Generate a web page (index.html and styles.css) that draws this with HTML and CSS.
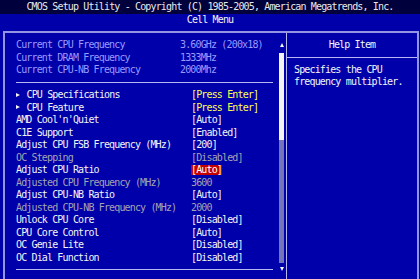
FILE: index.html
```html
<!DOCTYPE html>
<html>
<head>
<meta charset="utf-8">
<link rel="stylesheet" href="styles.css">
</head>
<body>
<div class="title">CMOS Setup Utility - Copyright (C) 1985-2005, American Megatrends, Inc.</div>
<div class="subtitle">Cell Menu</div>
<div class="frame">
  <div class="left">
    <div class="list">
      <div class="row info"><span class="label">Current CPU Frequency</span><span class="val">3.60GHz (200x18)</span></div>
      <div class="row info"><span class="label">Current DRAM Frequency</span><span class="val">1333MHz</span></div>
      <div class="row info"><span class="label">Current CPU-NB Frequency</span><span class="val">2000Mhz</span></div>
      <div class="sep"></div>
      <div class="row"><span class="label"><span class="tri"></span>CPU Specifications</span><span class="val enter">[Press Enter]</span></div>
      <div class="row"><span class="label"><span class="tri"></span>CPU Feature</span><span class="val enter">[Press Enter]</span></div>
      <div class="row"><span class="label">AMD Cool'n'Quiet</span><span class="val">[Auto]</span></div>
      <div class="row"><span class="label">C1E Support</span><span class="val">[Enabled]</span></div>
      <div class="row"><span class="label">Adjust CPU FSB Frequency (MHz)</span><span class="val">[200]</span></div>
      <div class="row dim"><span class="label">OC Stepping</span><span class="val">[Disabled]</span></div>
      <div class="row"><span class="label">Adjust CPU Ratio</span><span class="val sel">[Auto]</span></div>
      <div class="row dim"><span class="label">Adjusted CPU Frequency (MHz)</span><span class="val">3600</span></div>
      <div class="row"><span class="label">Adjust CPU-NB Ratio</span><span class="val">[Auto]</span></div>
      <div class="row dim"><span class="label">Adjusted CPU-NB Frequency (MHz)</span><span class="val">2000</span></div>
      <div class="row"><span class="label">Unlock CPU Core</span><span class="val">[Disabled]</span></div>
      <div class="row"><span class="label">CPU Core Control</span><span class="val">[Auto]</span></div>
      <div class="row"><span class="label">OC Genie Lite</span><span class="val">[Disabled]</span></div>
      <div class="row"><span class="label">OC Dial Function</span><span class="val">[Disabled]</span></div>
      <div class="sep"></div>
    </div>
    <div class="scroll">
      <div class="arrow"><span class="up"></span></div>
      <div class="thumb"></div>
      <div class="track"></div>
      <div class="arrow"><span class="down"></span></div>
    </div>
  </div>
  <div class="help">
    <div class="help-head">Help Item</div>
    <div class="help-sep"></div>
    <div class="help-text">Specifies the CPU</div>
    <div class="help-text">frequency multiplier.</div>
  </div>
</div>
</body>
</html>
```

FILE: styles.css
```css
html, body {
  margin: 0;
  padding: 0;
}
body {
  width: 420px;
  height: 279px;
  overflow: hidden;
  background: #0000aa;
  font-family: "DejaVu Sans Mono", "Liberation Mono", monospace;
  font-size: 10px;
  letter-spacing: -0.85px;
  color: #f4f4f4;
}
.title {
  height: 14px;
  line-height: 14px;
  background: #00003c;
  color: #e8e8e8;
  text-align: center;
  white-space: nowrap;
}
.subtitle {
  height: 17px;
  line-height: 12.5px;
  text-align: center;
  color: #f4f4f4;
}
.frame {
  margin-left: 3px;
  width: 416px;
  height: 248px;
  box-sizing: border-box;
  border: 2px solid #9494e4;
  border-bottom: none;
  display: flex;
  overflow: hidden;
}
.left {
  width: 281px;
  display: flex;
  flex: none;
}
.list {
  margin-left: 11px;
  width: 257px;
  padding-top: 5.5px;
}
.row {
  height: 12.5px;
  display: flex;
  align-items: center;
  white-space: nowrap;
}
.label {
  width: 175px;
  flex: none;
  display: flex;
  align-items: center;
}
.row.info .label {
  width: 164px;
}
.row.info {
  color: #9a9aff;
}
.row.dim {
  color: #a4a4b0;
}
.enter {
  color: #ffff50;
}
.sel {
  background: #c40000;
  color: #ffffff;
  line-height: 10px;
  height: 10px;
  display: inline-block;
}
.tri {
  width: 0;
  height: 0;
  border-left: 4px solid #f4f4f4;
  border-top: 2.5px solid transparent;
  border-bottom: 2.5px solid transparent;
  margin-right: 6.5px;
}
.sep {
  height: 12.5px;
  display: flex;
  align-items: center;
}
.sep::after {
  content: "";
  display: block;
  width: 100%;
  height: 1px;
  background: #b8b8f4;
}
.scroll {
  margin-left: 6px;
  width: 5px;
  padding-top: 5.5px;
  display: flex;
  flex-direction: column;
}
.arrow {
  height: 12.5px;
  flex: none;
  display: flex;
  align-items: center;
  justify-content: center;
}
.up {
  width: 0;
  height: 0;
  border-bottom: 4px solid #f4f4f4;
  border-left: 2.5px solid transparent;
  border-right: 2.5px solid transparent;
}
.down {
  width: 0;
  height: 0;
  border-top: 4px solid #f4f4f4;
  border-left: 2.5px solid transparent;
  border-right: 2.5px solid transparent;
}
.thumb {
  flex: none;
  margin-top: 1.5px;
  height: 87px;
  background: #f4f4f4;
}
.track {
  flex: none;
  height: 123px;
  background: #7474b8;
}
.help {
  flex: 1;
  border-left: 1px solid #b8b8f4;
  padding-top: 5.5px;
}
.help-head {
  height: 12.5px;
  line-height: 12.5px;
  text-align: center;
}
.help-sep {
  height: 12.5px;
  display: flex;
  align-items: center;
}
.help-sep::after {
  content: "";
  display: block;
  width: 100%;
  height: 1px;
  background: #b8b8f4;
}
.help-text {
  height: 12.5px;
  line-height: 12.5px;
  padding-left: 7px;
  white-space: nowrap;
}
```
